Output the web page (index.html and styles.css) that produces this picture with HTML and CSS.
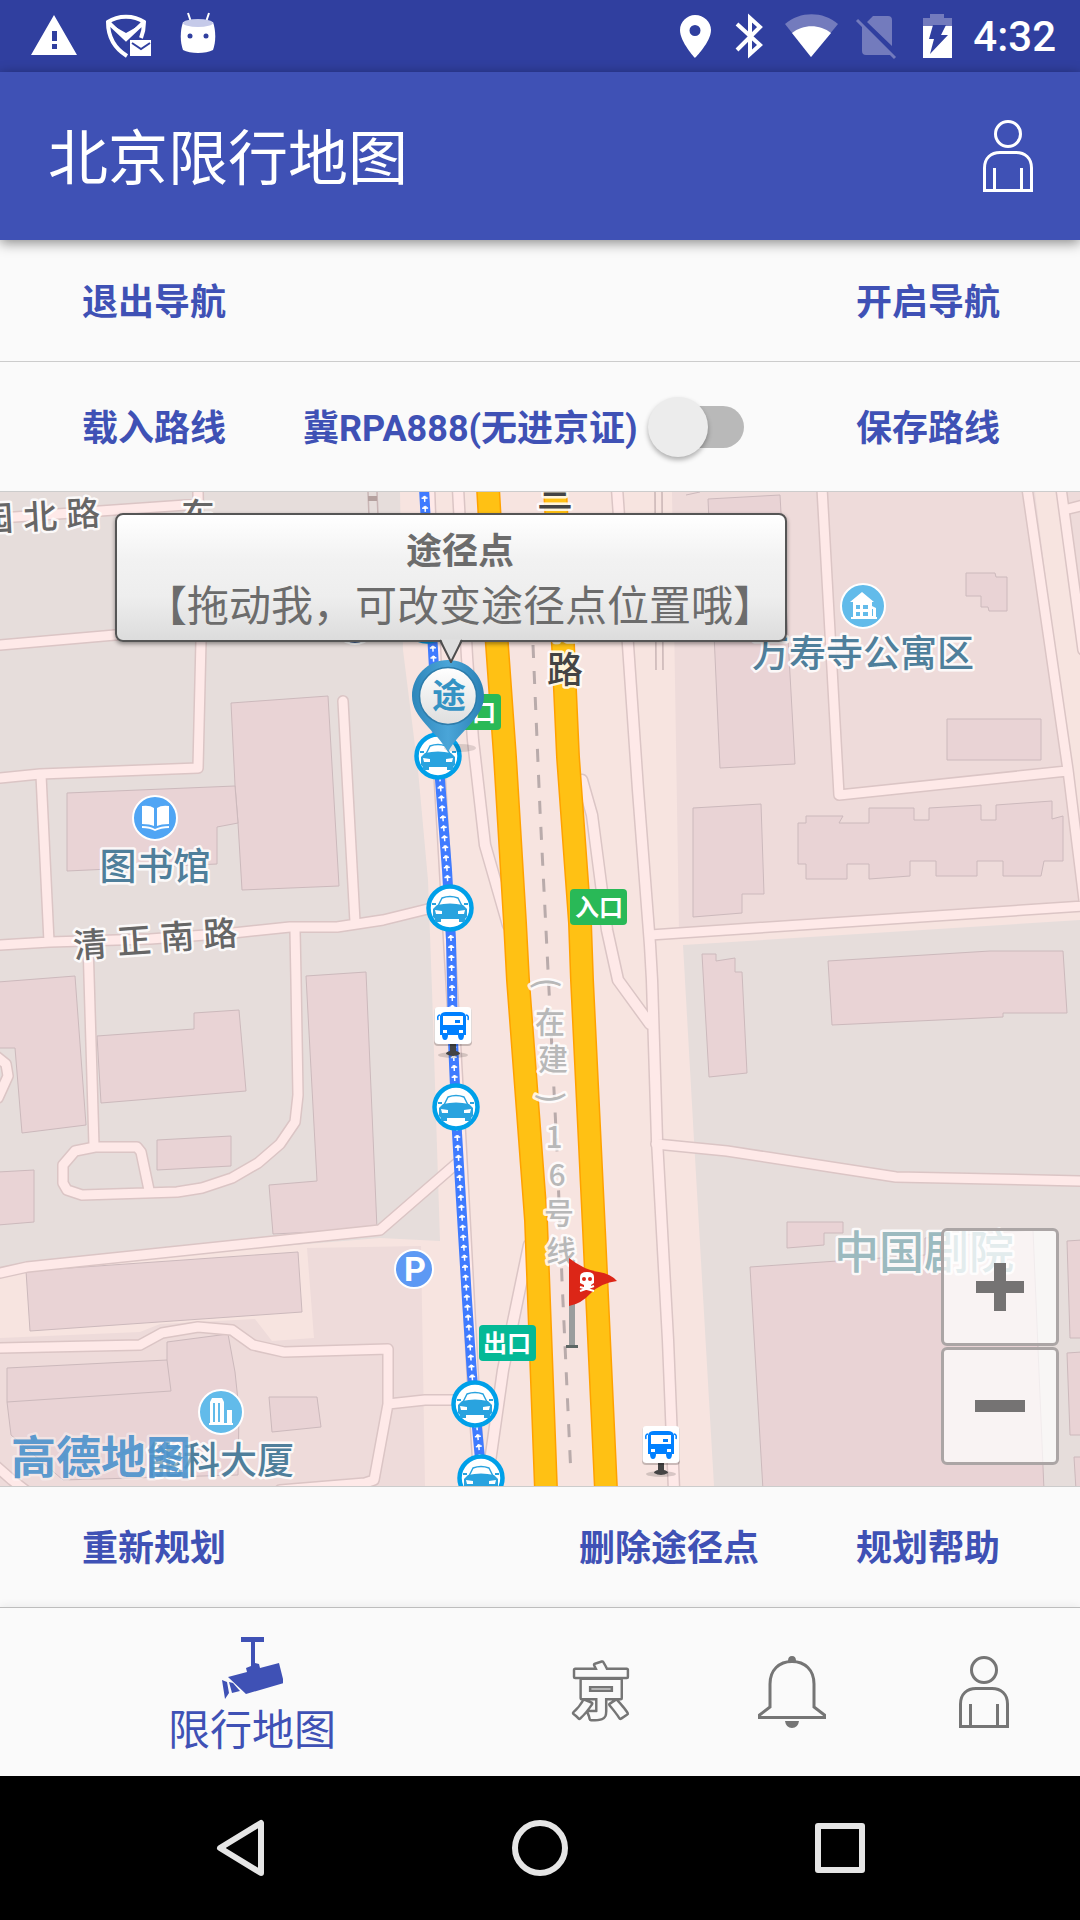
FILE: index.html
```
<!DOCTYPE html>
<html lang="zh-CN">
<head>
	<meta charset="utf-8">
	<meta name="viewport" content="width=device-width, initial-scale=1.0">
	<link rel="stylesheet" href="styles.css">
	<title>北京限行地图</title>
</head>
<body>
	<div class="statusbar">
		<div class="status-icons">
			<svg width="91" height="72" viewBox="0 0 91 72"><path fill="#fff" fill-rule="evenodd" d="M54 15l23 40H31zM52 31v10h5V31zM52 44v5h5v-5z"/></svg>
			<svg width="75" height="72" viewBox="91 0 75 72">
				<path fill="none" stroke="#fff" stroke-width="4" d="M127 56C114 48 108 36 108 22c10-7 26-7 36 0 0 6-1 11-3 16M109 23l17 16 17-16"/>
				<path fill="#fff" d="M110 24l16 9 16-9-16 17zM130 40h21v16h-21z"/>
				<path fill="none" stroke="#303f9f" stroke-width="2" d="M132 43l9 6 9-6"/>
			</svg>
			<svg width="60" height="72" viewBox="166 0 60 72">
				<path stroke="#fff" stroke-width="2" d="M188 13l3 9M209 13l-3 9"/>
				<path fill="#fff" d="M183 22h30c3 9 3 20 0 28-7 4-23 4-30 0-3-8-3-19 0-28z"/>
				<ellipse cx="198" cy="23" rx="15" ry="4" fill="#c5cae9"/>
				<circle cx="190" cy="36" r="2.500" fill="#303f9f"/><circle cx="206" cy="36" r="2.500" fill="#303f9f"/>
			</svg>
		</div>
		<div class="status-icons">
			<svg width="44" height="72" viewBox="680 0 44 72"><path fill="#fff" fill-rule="evenodd" d="M695 15c-8 0-15 7-15 15 0 12 15 28 15 28s16-16 16-28c0-8-7-15-16-15zm0 10a5.500 5.500 0 1 1 0 11 5.500 5.500 0 0 1 0-11z"/></svg>
			<svg width="50" height="72" viewBox="724 0 50 72"><path fill="none" stroke="#fff" stroke-width="4" d="M737 24l23 21-10 9V18l10 9-23 23"/></svg>
			<svg width="73" height="72" viewBox="774 0 73 72">
				<path fill="#737bbd" d="M785 24c15-13 38-13 53 0l-27 33z"/><path fill="#fff" d="M792 33c11-9 28-9 39 0l-20 24z"/>
			</svg>
			<svg width="62" height="72" viewBox="847 0 62 72">
				<path fill="#737bbd" d="M867 22l6-6h15q4 0 4 4v26zM862 25l29 30h-25q-4 0-4-4z"/>
				<path stroke="#737bbd" stroke-width="3" d="M857 20l38 38"/>
			</svg>
			<svg width="64" height="72" viewBox="909 0 64 72">
				<path fill="#737bbd" d="M930 14h14v4h8v9h-29v-9h7z"/><path fill="#fff" d="M923 26h29v32h-29z"/>
				<path fill="#303f9f" d="M933 25h13l-5 10h7l-18 19 4-15h-5z"/>
			</svg>
			<time class="clock">4:32</time>
		</div>
	</div>

	<header class="appbar">
		<h1>北京限行地图</h1>
		<button class="icon-btn" aria-label="用户">
			<svg width="50" height="72" viewBox="0 0 50 72"><use href="#person"/></svg>
		</button>
	</header>

	<div class="row">
		<button class="text-btn">退出导航</button>
		<button class="text-btn end">开启导航</button>
	</div>
	<div class="row row-plate">
		<button class="text-btn">载入路线</button>
		<label class="plate" for="permit">冀RPA888(无进京证)</label>
		<input class="switch" type="checkbox" id="permit">
		<button class="text-btn end">保存路线</button>
	</div>

	<main class="map">
		<svg class="map-canvas" viewBox="0 492 1080 994">
			<defs>
				<linearGradient id="pinBlue"><stop offset="0" stop-color="#2f86ba"/><stop offset=".5" stop-color="#4aa5d8"/><stop offset="1" stop-color="#2a80b5"/></linearGradient>
				<linearGradient id="pinFace" x2="0" y2="1"><stop offset="0" stop-color="#fff"/><stop offset="1" stop-color="#dedede"/></linearGradient>
				<g id="person" fill="none" stroke="currentColor" stroke-width="3">
					<circle cx="25" cy="14" r="12.500"/>
					<path d="M1.500 70.500V48C1.500 38 8 32.500 17 32.500h16c9 0 15.500 5.500 15.500 15.500v22.500zM11.500 48v22M38.500 48v22"/>
				</g>
				<g id="car">
					<circle r="21.500" fill="#fff" stroke="#00a0e9" stroke-width="4.500"/>
					<path fill="none" stroke="#29a3df" stroke-width="1.500" d="M-12-2l4-8q8-3 16 0l4 8"/>
					<path fill="#29a3df" d="M-18-5h4v2h-4zM14-5h4v2h-4zM-13-3q13-3 26 0l4 4v8l-2 2v3H9v-3H-9v3h-6v-3l-2-2V1z"/>
					<path fill="#fff" d="M-15 2l7 1v3h-6zM15 2L8 3v3h6z"/>
				</g>
				<g id="bus">
					<ellipse cy="29" rx="15" ry="3" fill="#000" opacity=".15"/>
					<path fill="#444" d="M-3 18h6v7q4 1 4 3-7 4-14 0 0-2 4-3z"/>
					<rect x="-19" y="-18" width="38" height="38" rx="4" fill="#000" opacity=".2"/>
					<rect x="-18.500" y="-19" width="37" height="37" rx="4" fill="#fff"/>
					<path fill="#0080ff" d="M-13-10q1-4 6-4H7q5 0 6 4V9h-2q0 5-3 5T5 9H-5q0 5-3 5t-3-5h-2z"/>
					<path fill="none" stroke="#0080ff" stroke-width="1.500" d="M-13-11q-3 0-2 5M13-11q3 0 2 5"/>
					<path fill="#fff" d="M-10-10h20v9h-20zM-10 4h4v3h-4zM6 4h4v3H6z"/><path fill="#0080ff" d="M2-6h5v3H2z"/>
				</g>
				<g id="roadA">
					<path d="M0 518L200 504M198 492L201 640L198 768L40 774L0 778M0 645L115 635L200 630"/>
					<path d="M41 775L49 942M0 945L50 942L150 939L233 933L290 927H337L383 920L440 906M343 701L355 922"/>
					<path d="M295 930L296 980L298 1095L295 1122L280 1144L258 1163L232 1178L202 1188L177 1192L82 1195L67 1190L63 1183V1165L75 1151L95 1147H137L141 1152L149 1190M88 942L94 1146"/>
					<path d="M-4 1056L6 1064L8 1076L-2 1098M0 1273L27 1267L380 1230L456 1164"/>
					<path d="M-4 1348L140 1345L162 1333L198 1327L232 1330L253 1345L284 1352L388 1349V1404L374 1480L365 1483L280 1490M388 1404L425 1400H470M-4 1466L12 1480L25 1490"/>
					<path d="M822 488L839 795L1067 771M1027 488L1068 770L1084 900M1061 488L1083 650M1064 510L1084 505M650 935L1084 906M656 1144L727 1151L896 1177L1084 1181"/>
				</g>
				<g id="roadB">
					<path d="M429 488L440 783L452 990L460 1133L473 1380L480 1490M458 488L467 657L473 740L485 845L508 925"/>
					<path d="M617 488L628 645L638 790L650 945L652 980L657 1140L668 1340L674 1490M582 780L592 815L607 930L618 980L650 1024M529 1245L503 1370L486 1490"/>
				</g>
				<path id="route" d="M482 1480L472 1375L467 1300L457 1133L453 1040L452 985L451 940L447 870L440 780L433 650L424 488"/>
			</defs>

			<!-- ground -->
			<path fill="#e6dddb" d="M0 492h1080v994H0z"/>
			<path fill="#f7e4e0" d="M0 1275L27 1267L380 1238L440 1241L432 990L428 880L418 770L403 650L400 492H1080V920L683 945L694 1140L709 1400L714 1486H0z"/>
			<path fill="#eedbda" d="M307 1248L421 1246L425 1486H0V1338L140 1332L160 1324L255 1319L272 1341L314 1338zM672 492H1035L1080 850V907L679 932zM1064 492h16v150z"/>

			<g class="building">
				<path d="M231 703L328 696L339 886L242 890L238 823L235 785z"/>
				<path d="M67 793L235 786L238 823L217 827V864L67 871z"/>
				<path d="M-2 982L75 976L86 1125L22 1133L15 1048H-2zM97 1036L194 1029V1013L239 1010L246 1091L101 1103zM157 1140L231 1136V1166L157 1170zM-2 1172L34 1170V1222L-2 1225z"/>
				<path d="M306 976L366 972L377 1229L273 1234L269 1185L317 1181zM26 1271L298 1252L302 1312L30 1331z"/>
				<path d="M7 1368L167 1360V1342L228 1334L235 1372L239 1410L238 1475L63 1480L11 1435L7 1402z"/>
				<path fill="none" d="M7 1402L171 1391L167 1360"/>
				<path d="M269 1397H317L321 1427L272 1432z"/>
				<path d="M686 495L700 492M708 499L780 495L795 764L720 768zM693 808L761 804L764 894H742V913L693 917z"/>
				<path d="M966 573H995L996 577H1007V611H989L988 607H981V596H966zM947 719H1041V760H947z"/>
				<path d="M798 823H806V816H843L839 823H869V808H914V820H929V808L981 805V820H996V805L1052 801V819L1063 816V861H1044L1041 876H1003V861H977V876H936V861H910V876L869 879V864H847V879H806V864H798z"/>
				<path d="M828 961L990 951H1063L1067 1013H1003V1017L832 1025zM702 954H716V961L735 958V972H742L747 1073L709 1077z"/>
				<path d="M787 1222H843V1233H824V1245L787 1248zM750 1267L925 1255V1238L1033 1230L1044 1490H763zM1067 1241L1082 1240V1338H1070zM1067 1353L1082 1352V1435H1070zM1074 1457H1082V1490H1076z"/>
			</g>

			<!-- roads: edge first, surface on top -->
			<use href="#roadA" class="road-edge"/>
			<use href="#roadB" class="road-edge wide"/>
			<use href="#roadA" class="road"/>
			<use href="#roadB" class="road wide"/>
			<path fill="none" stroke="#c9b5b5" stroke-width="1.500" d="M655 492L656 670M662 492L663 670M368 492L369 516M377 492L378 516"/>
			<path fill="#b5a19f" d="M368 496h9v5h-9z"/>
			<g class="highway-edge"><path d="M488 488L497 645L505 757L515 923L518 980L536 1220L546 1490M555 488L563 645L568 757L580 923L582 980L594 1230L606 1490"/></g>
			<g class="highway"><path d="M488 488L497 645L505 757L515 923L518 980L536 1220L546 1490M555 488L563 645L568 757L580 923L582 980L594 1230L606 1490"/></g>
			<path class="subway" d="M533 645L540 810L546 930L549 990L557 1150L562 1280L571 1476"/>

			<!-- route with direction arrows -->
			<use href="#route" fill="none" stroke="#3f7bff" stroke-width="10"/>
			<use href="#route" fill="none" stroke="#fff" stroke-width="1.500" stroke-dasharray="6 4"/>
			<use href="#route" fill="none" stroke="#fff" stroke-width="3.500" stroke-dasharray="1.500 8.500" stroke-dashoffset="-4"/>
			<use href="#route" fill="none" stroke="#fff" stroke-width="6" stroke-dasharray="1.500 8.500" stroke-dashoffset="-3"/>

			<g class="sign">
				<rect x="444" y="694" width="57" height="36" rx="4" fill="#29b957"/>
				<text x="472" y="721">入口</text>
				<rect x="570" y="889" width="57" height="36" rx="4" fill="#29b957"/>
				<text x="599" y="916">入口</text>
				<rect x="479" y="1325" width="57" height="36" rx="4" fill="#04b996"/>
				<text x="507" y="1352">出口</text>
			</g>

			<g class="label street">
				<text x="-4" y="531" transform="rotate(-3 -4 518)">园</text>
				<text x="40" y="529" transform="rotate(-3 40 516)">北</text>
				<text x="83" y="526" transform="rotate(-3 83 513)">路</text>
				<text x="198" y="528">东</text>
				<text x="90" y="957" transform="rotate(-4 90 944)">清</text>
				<text x="134" y="953" transform="rotate(-4 134 940)">正</text>
				<text x="177" y="949" transform="rotate(-4 177 936)">南</text>
				<text x="220" y="946" transform="rotate(-4 220 933)">路</text>
			</g>
			<g class="label ring">
				<text x="555" y="508">三</text>
				<text x="562" y="639">北</text>
				<text x="565" y="683">路</text>
			</g>
			<g class="label line16">
				<text x="547" y="994" transform="rotate(87 547 983)">(</text>
				<text x="550" y="1033">在</text>
				<text x="553" y="1070">建</text>
				<text x="552" y="1109" transform="rotate(87 552 1098)">)</text>
				<text x="554" y="1148">1</text>
				<text x="557" y="1186">6</text>
				<text x="559" y="1224">号</text>
				<text x="561" y="1262">线</text>
			</g>
			<g class="label place">
				<text x="155" y="880">图书馆</text>
				<text x="863" y="667">万寿寺公寓区</text>
				<text x="220" y="1474">能科大厦</text>
			</g>
			<text class="label theatre" x="924" y="1269">中国剧院</text>
			<text class="label brand" x="101" y="1474">高德地图</text>

			<g class="poi">
				<circle cx="355" cy="622" r="22" fill="#3b5b8c"/>
				<circle cx="155" cy="818" r="22" fill="#50a5f4"/>
				<circle cx="863" cy="606" r="22" fill="#62bbea"/>
				<circle cx="221" cy="1412" r="22" fill="#62bbea"/>
				<circle cx="414" cy="1269" r="19" fill="#5d99f4"/>
			</g>
			<path fill="#fff" d="M142 806q8-1 12 2v18q-4-2-12-2zM169 806q-8-1-12 2v18q4-2 12-2zM142 826q8 0 13 3 6-3 14-3v2q-8 0-14 3-5-3-13-3z"/>
			<path fill="#fff" fill-rule="evenodd" d="M862 592l12 10h-2v4l4 2v9h1v2h-26v-2h2v-15h-3zM856 605v4h4v-4zM863 605v4h5v-4zM856 612v4h4v-4zM863 612v4h5v-4zM872 609v7h1v-7z"/>
			<path fill="#fff" d="M210 1402l2-4h10l2 4v21h3v-13h5v13h1v2h-24v-2h1z"/>
			<path stroke="#62bbea" stroke-width="2" d="M214 1403v19M219 1403v19"/>
			<text class="parking" x="415" y="1281">P</text>

			<use href="#car" x="427" y="620"/>
			<use href="#car" x="438" y="756"/>
			<use href="#car" x="450" y="908"/>
			<use href="#bus" x="453" y="1026"/>
			<use href="#car" x="456" y="1107"/>
			<use href="#car" x="475" y="1404"/>
			<use href="#car" x="481" y="1478"/>
			<use href="#bus" x="661" y="1445"/>

			<!-- danger flag -->
			<path fill="#9a9d9d" d="M569 1300h6v45h-6z"/><path fill="#5d6664" d="M566 1345h12v3h-12z"/>
			<path fill="#dc2617" d="M569 1258q15 12 30 14 12 2 18 9-16 2-26 12-10 11-22 13z"/>
			<path fill="#fff" d="M580 1277q0-5 7-5t7 5v6l-3 2v3h-7v-3l-4-2z"/>
			<circle cx="584" cy="1279" r="2" fill="#dc2617"/><circle cx="590" cy="1279" r="2" fill="#dc2617"/>
			<path stroke="#fff" stroke-width="2" d="M580 1287l14 4M594 1286l-14 5"/>

			<!-- waypoint pin -->
			<ellipse cx="460" cy="748" rx="16" ry="4" fill="#000" opacity=".12"/>
			<path fill="url(#pinBlue)" d="M448 660c-20 0-36 16-36 36 0 22 24 34 36 56 12-22 36-34 36-56 0-20-16-36-36-36z"/>
			<circle cx="448" cy="696" r="28.500" fill="url(#pinFace)" stroke="#2d7cab" stroke-width="1.500"/>
			<text class="pin-text" x="449" y="708">途</text>
		</svg>

		<div class="info-window">
			<strong>途径点</strong>
			<span>【拖动我，可改变途径点位置哦】</span>
			<svg class="info-tail" width="24" height="24" viewBox="0 0 24 24"><path fill="#dedede" d="M2 0h20L12 23z"/><path fill="none" stroke="#4d4d4d" stroke-width="2" d="M1 1l11 22L23 1"/></svg>
		</div>

		<div class="zoom">
			<button aria-label="放大"><svg width="50" height="50" viewBox="0 0 50 50"><path fill="#757373" d="M19 1h12v18h18v12H31v18H19V31H1V19h18z"/></svg></button>
			<button aria-label="缩小"><svg width="50" height="50" viewBox="0 0 50 50"><path fill="#757373" d="M0 19h50v12H0z"/></svg></button>
		</div>
	</main>

	<div class="row row-plan">
		<button class="text-btn">重新规划</button>
		<button class="text-btn mid">删除途径点</button>
		<button class="text-btn">规划帮助</button>
	</div>

	<nav class="tabs">
		<a class="tab active" href="#map">
			<svg width="62" height="64" viewBox="221 1637 62 64" fill="currentColor">
				<path d="M241 1637h23v5h-9v21l4 1 1 4 19-5 5 20-38 11-18-17 19-5-1-4 5-2v-24h-10z"/><path d="M222 1680l5 2 2 11-4 6zM229 1682l4 1 7 8-8 2z"/>
			</svg>
			<span>限行地图</span>
		</a>
		<a class="tab" href="#beijing" aria-label="京">
			<svg width="72" height="72" viewBox="0 0 72 72"><text class="jing" x="37" y="57">京</text></svg>
		</a>
		<a class="tab" href="#notice" aria-label="通知">
			<svg width="68" height="72" viewBox="0 0 68 72">
				<path fill="none" stroke="currentColor" stroke-width="3" d="M12 51V28C12 14 21 5.500 34 5.500S56 14 56 28v23l10.500 8v2.500h-65V59z"/>
				<path fill="currentColor" d="M30 5q0-5 4-5t4 5zM27 65h14q-1 7-7 7t-7-7z"/>
			</svg>
		</a>
		<a class="tab" href="#me" aria-label="我的">
			<svg width="50" height="72" viewBox="0 0 50 72"><use href="#person"/></svg>
		</a>
	</nav>

	<div class="sysnav">
		<button aria-label="返回"><svg width="56" height="60" viewBox="0 0 56 60"><path d="M49 5v50L8 30z"/></svg></button>
		<button aria-label="主页"><svg width="60" height="60" viewBox="0 0 60 60"><circle cx="30" cy="30" r="25"/></svg></button>
		<button aria-label="最近任务"><svg width="60" height="60" viewBox="0 0 60 60"><rect x="8" y="8" width="44" height="44"/></svg></button>
	</div>
</body>
</html>
```
FILE: styles.css
```
* {
	box-sizing: border-box;
}

body {
	margin: 0;
	background: #fafafa;
	font-family: Roboto, "Noto Sans CJK SC", sans-serif;
}

button {
	border: none;
	background: none;
	padding: 0;
	font-family: inherit;
	color: inherit;
	cursor: pointer;
}

svg {
	display: block;
}

/* top bars */
.statusbar {
	display: flex;
	justify-content: space-between;
	height: 72px;
	background: #303f9f;
	color: #fff;
}

.status-icons {
	display: flex;
	align-items: center;
}

.clock {
	padding-right: 24px;
	font-size: 42px;
	font-weight: 500;
}

.appbar {
	position: relative;
	z-index: 1;
	display: flex;
	align-items: center;
	justify-content: space-between;
	height: 168px;
	padding: 0 47px 0 48px;
	background: #3f51b5;
	color: #fff;
	box-shadow: 0 3px 12px rgba(0,0,0,.45);
}

.appbar h1 {
	margin: 0;
	padding-bottom: 6px;
	font-size: 60px;
	font-weight: 400;
}

/* action rows */
.row {
	display: flex;
	align-items: center;
	height: 122px;
	border-bottom: 1px solid #ccc;
	color: #3f51b5;
	font-size: 36px;
	font-weight: 700;
}

.row-plate {
	height: 130px;
}

.text-btn {
	height: 100%;
	padding: 0 77px 4px 82px;
	font-size: 36px;
	font-weight: 700;
}

.plate {
	padding-bottom: 4px;
}

.end {
	margin-left: auto;
	padding-right: 80px;
}

.row-plan {
	height: 120px;
	border: none;
}

.mid {
	margin-left: auto;
	padding: 0 15px 4px;
}

.row-plan .text-btn:last-child {
	padding-right: 80px;
}

.switch {
	appearance: none;
	position: relative;
	width: 98px;
	height: 60px;
	margin: 0 0 0 10px;
}

.switch::before {
	content: "";
	position: absolute;
	inset: 9px 2px 9px 12px;
	border-radius: 21px;
	background: #b9b9b9;
}

.switch::after {
	content: "";
	position: absolute;
	left: 0;
	top: 0;
	width: 60px;
	height: 60px;
	border-radius: 50%;
	background: #ececec;
	box-shadow: 0 3px 5px rgba(0,0,0,.3);
}

.switch:checked::after {
	left: 38px;
	background: #3f51b5;
}

/* map */
.map {
	position: relative;
	border-bottom: 1px solid #ccc;
}

.map-canvas {
	width: 100%;
	height: auto;
	overflow: hidden;
}

.building {
	fill: #e9d3d5;
	stroke: #ccb9bc;
}

.road, .road-edge, .highway, .highway-edge {
	fill: none;
	stroke-linecap: round;
	stroke-linejoin: round;
}

.road-edge {
	stroke: #dbc5c5;
	stroke-width: 12px;
}

.road {
	stroke: #fee9e8;
	stroke-width: 9px;
}

.road-edge.wide {
	stroke-width: 13px;
}

.road.wide {
	stroke-width: 10px;
}

.highway-edge {
	stroke: #ffa200;
	stroke-width: 24px;
}

.highway {
	stroke: #ffc114;
	stroke-width: 21px;
}

.subway {
	fill: none;
	stroke: #b9abab;
	stroke-width: 3px;
	stroke-dasharray: 13 13;
}

.label, .sign, .parking, .pin-text, .jing {
	font-family: "Noto Sans CJK SC", sans-serif;
	text-anchor: middle;
}

.label {
	paint-order: stroke;
	stroke: #fff;
	stroke-opacity: .85;
	stroke-width: 5px;
	stroke-linejoin: round;
}

.street {
	fill: #666;
	font-size: 34px;
	font-weight: 500;
}

.ring {
	fill: #444;
	font-size: 36px;
	font-weight: 500;
}

.line16 {
	fill: #b8b8b8;
	font-size: 30px;
	font-weight: 500;
}

.place {
	fill: #4f7f9b;
	font-size: 37px;
	font-weight: 500;
}

.theatre {
	fill: #9cbabf;
	font-size: 45px;
	font-weight: 500;
}

.brand {
	fill: #468fcb;
	fill-opacity: .9;
	font-size: 45px;
	font-weight: 700;
	stroke-opacity: .4;
}

.sign {
	fill: #fff;
	font-size: 24px;
	font-weight: 700;
}

.poi {
	stroke: #fff;
	stroke-width: 2px;
}

.parking {
	fill: #fff;
	font-family: Roboto, sans-serif;
	font-size: 34px;
	font-weight: 700;
}

.pin-text {
	fill: #3593c4;
	font-size: 34px;
	font-weight: 700;
}

.info-window {
	position: absolute;
	left: 115px;
	top: 21px;
	padding: 12px 10px 3px 28px;
	border: 2px solid #555;
	border-radius: 8px;
	background: linear-gradient(#fff, #f2f2f2 35%, #eee 65%, #dcdcdc);
	box-shadow: 0 2px 4px rgba(0,0,0,.4);
	color: #6c6c6c;
	text-align: center;
}

.info-window strong {
	display: block;
	font-size: 36px;
	font-weight: 700;
	line-height: 50px;
}

.info-window span {
	display: block;
	font-size: 42px;
	line-height: 60px;
	white-space: nowrap;
}

.info-tail {
	position: absolute;
	left: 322px;
	top: 124px;
}

.zoom {
	position: absolute;
	right: 21px;
	bottom: 21px;
	display: grid;
	gap: 1px;
}

.zoom button {
	display: grid;
	place-items: center;
	width: 118px;
	height: 118px;
	border: 3px solid #aba5a5;
	border-radius: 6px;
	background: rgba(255,255,255,.72);
}

/* bottom tabs */
.tabs {
	position: relative;
	display: flex;
	height: 169px;
	border-top: 1px solid #bdbdbd;
	background: #fafafa;
	box-shadow: 0 -2px 8px rgba(0,0,0,.06);
}

.tab {
	display: flex;
	flex: 0 0 192px;
	flex-direction: column;
	align-items: center;
	justify-content: center;
	color: #757575;
	text-decoration: none;
}

.tab.active {
	flex: 1;
	padding-top: 14px;
	color: #3f51b5;
	font-size: 42px;
	line-height: 60px;
}

.jing {
	fill: #fafafa;
	stroke: #757575;
	stroke-width: 5px;
	stroke-linejoin: round;
	paint-order: stroke;
	font-size: 58px;
	font-weight: 700;
}

.sysnav {
	display: flex;
	justify-content: center;
	height: 144px;
	background: #000;
}

.sysnav button {
	display: grid;
	place-items: center;
	width: 300px;
}

.sysnav svg {
	fill: none;
	stroke: #e5e5e5;
	stroke-width: 6px;
	stroke-linejoin: round;
}
```
